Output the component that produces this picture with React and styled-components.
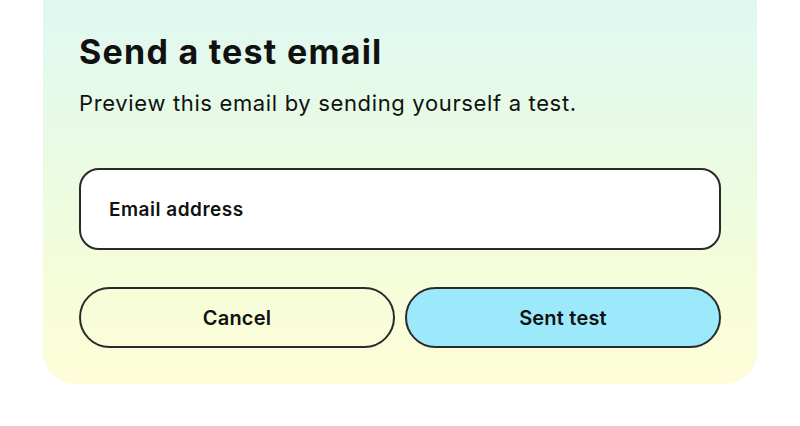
import React, { useState } from "react";
import styled, { createGlobalStyle } from "styled-components";

export default function App() {
  const [email, setEmail] = useState("");

  return (
    <>
      <GlobalStyle />
      <Page>
        <Card>
          <Title>Send a test email</Title>
          <Subtitle>Preview this email by sending yourself a test.</Subtitle>
          <InputBox>
            <EmailInput
              type="email"
              placeholder="Email address"
              value={email}
              onChange={(e) => setEmail(e.target.value)}
            />
          </InputBox>
          <ButtonRow>
            <ActionButton>Cancel</ActionButton>
            <ActionButton primary>Sent test</ActionButton>
          </ButtonRow>
        </Card>
      </Page>
    </>
  );
}

// Styles
const GlobalStyle = createGlobalStyle`
  body {
    margin: 0;
    background: #ffffff;
    font-family: "Inter", "Noto Sans", sans-serif;
    color: #111111;
  }
`;

const Page = styled.div`
  display: flex;
  justify-content: center;
  width: 800px;
  height: 426px;
`;

const Card = styled.div`
  width: 714px;
  height: 384px;
  box-sizing: border-box;
  padding: 30px 36px 35px;
  border-radius: 0 0 32px 32px;
  background: linear-gradient(180deg, #e0f8f2 0%, #e9fbe3 40%, #f6fdd9 75%, #fdfdd8 100%);
  display: flex;
  flex-direction: column;
`;

const Title = styled.h1`
  margin: 0;
  font-size: 34px;
  line-height: 44px;
  font-weight: 700;
  letter-spacing: 1.25px;
`;

const Subtitle = styled.p`
  margin: 14px 0 0;
  font-size: 22px;
  line-height: 30px;
  font-weight: 400;
  letter-spacing: 0.65px;
`;

const InputBox = styled.div`
  margin-top: 50px;
  height: 82px;
  box-sizing: border-box;
  border: 2px solid #2a2a2a;
  border-radius: 20px;
  background: #ffffff;
  display: flex;
  align-items: center;
  padding: 0 28px;
`;

const EmailInput = styled.input`
  border: none;
  outline: none;
  width: 100%;
  padding: 0;
  background: transparent;
  font-family: "Inter", "Noto Sans", sans-serif;
  font-size: 19px;
  font-weight: 600;
  letter-spacing: 0.5px;
  color: #111111;
  &::placeholder {
    color: #111111;
  }
`;

const ButtonRow = styled.div`
  margin-top: 37px;
  display: grid;
  grid-template-columns: 1fr 1fr;
  gap: 10px;
`;

const ActionButton = styled.button`
  height: 61px;
  border: 2px solid #2a2a2a;
  border-radius: 31px;
  background: ${(p) => (p.primary ? "#9ce9fb" : "transparent")};
  font-family: "Inter", "Noto Sans", sans-serif;
  font-size: 20px;
  font-weight: 600;
  letter-spacing: 0.2px;
  color: #111111;
  cursor: pointer;
`;
